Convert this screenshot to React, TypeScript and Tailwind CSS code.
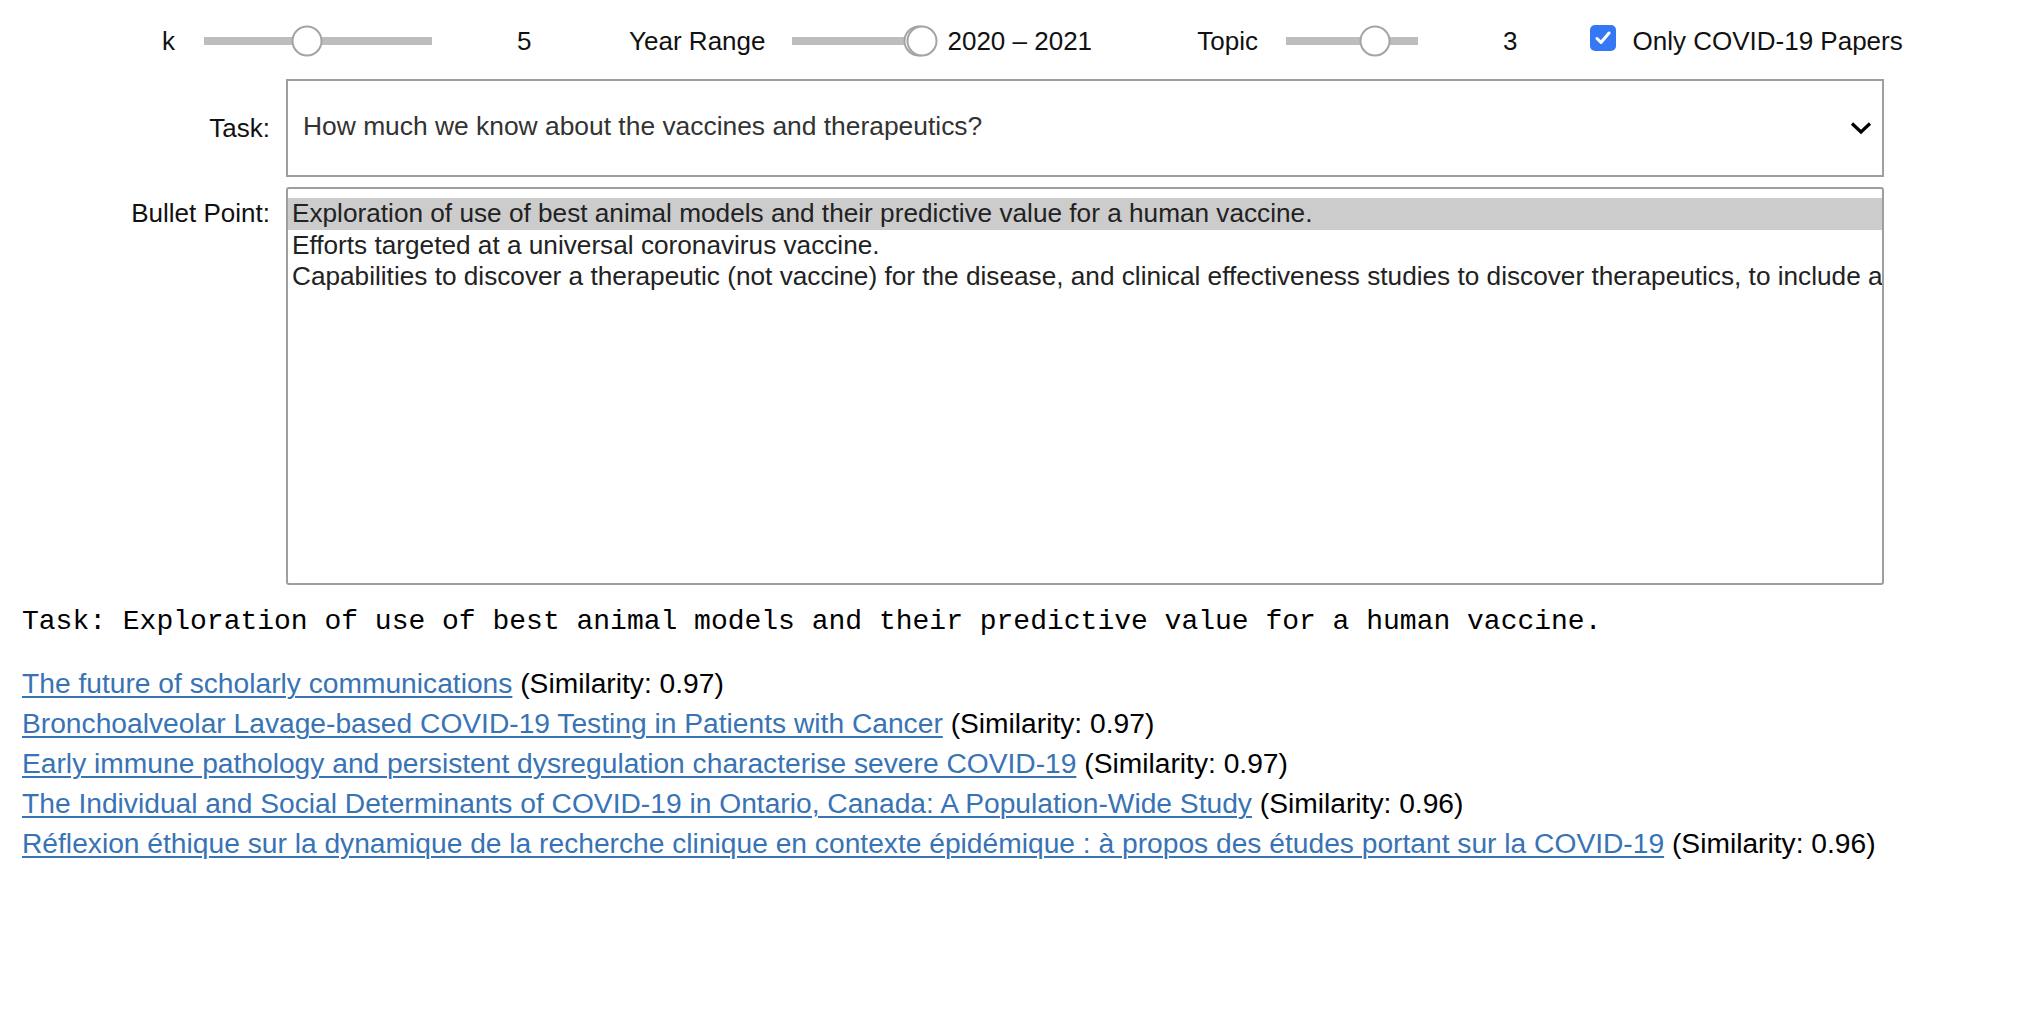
import React from 'react';

const sans = { fontFamily: '"Liberation Sans", Arial, Helvetica, sans-serif' };

// one slider track; thumbs sit over it at a fraction of the track length
function Slider({ trackClass, values }: { trackClass: string; values: number[] }) {
  return (
    <div className="flex h-[56px] items-center px-[15.5px]">
      <div className={`relative h-[8px] bg-[#bdbdbd] ${trackClass}`}>
        {values.map((v, i) => (
          <div
            key={i}
            className="absolute top-1/2 h-[31px] w-[31px] -translate-x-1/2 -translate-y-1/2 rounded-full border-2 border-[#a4a4a4] bg-white"
            style={{ left: `${v * 100}%` }}
          />
        ))}
      </div>
    </div>
  );
}

const bulletPoints = [
  'Exploration of use of best animal models and their predictive value for a human vaccine.',
  'Efforts targeted at a universal coronavirus vaccine.',
  'Capabilities to discover a therapeutic (not vaccine) for the disease, and clinical effectiveness studies to discover therapeutics, to include antiviral agents.',
];

const papers = [
  { title: 'The future of scholarly communications', score: '0.97' },
  { title: 'Bronchoalveolar Lavage-based COVID-19 Testing in Patients with Cancer', score: '0.97' },
  { title: 'Early immune pathology and persistent dysregulation characterise severe COVID-19', score: '0.97' },
  { title: 'The Individual and Social Determinants of COVID-19 in Ontario, Canada: A Population-Wide Study', score: '0.96' },
  {
    title: 'Réflexion éthique sur la dynamique de la recherche clinique en contexte épidémique : à propos des études portant sur la COVID-19',
    score: '0.96',
  },
];

export default function App() {
  return (
    <div className="min-h-screen w-full bg-white pt-[13px] text-black" style={sans}>
      {/* sliders + checkbox */}
      <div className="flex h-[56px] items-center text-[26px] leading-[30px] text-[#111]">
        <div className="w-[175px] text-right">k</div>
        <div className="ml-[13px]">
          <Slider trackClass="w-[228px]" values={[0.456]} />
        </div>
        <div className="ml-[70px]">5</div>
        <div className="w-[234px] text-right">Year Range</div>
        <div className="ml-[11px]">
          <Slider trackClass="w-[130px]" values={[0.977, 1]} />
        </div>
        <div className="ml-[10px] whitespace-nowrap">2020 – 2021</div>
        <div className="w-[166px] text-right">Topic</div>
        <div className="ml-[12px]">
          <Slider trackClass="w-[132px]" values={[0.68]} />
        </div>
        <div className="ml-[70px]">3</div>
        <div className="mb-[7px] ml-[72px] flex h-[26px] w-[26px] items-center justify-center rounded-[5px] bg-[#3478f6]">
          <svg width="16" height="14" viewBox="0 0 16 14" fill="none">
            <path d="M2 7.5 L6 11.5 L14 2" stroke="white" strokeWidth="3" strokeLinecap="round" strokeLinejoin="round" />
          </svg>
        </div>
        <div className="ml-[17px] whitespace-nowrap">Only COVID-19 Papers</div>
      </div>

      {/* task dropdown */}
      <div className="mt-[10px] flex items-center text-[26px]">
        <div className="w-[270px] text-right text-[#111]">Task:</div>
        <div className="ml-[16px] flex h-[98px] w-[1598px] items-center justify-between border-2 border-[#9e9e9e] bg-white pl-[15px] pr-[10px] text-[26.4px] text-[#333]">
          <span className="-mt-[2px]">How much we know about the vaccines and therapeutics?</span>
          <svg width="22" height="14" viewBox="0 0 22 14" fill="none">
            <path d="M2 2.5 L11 11 L20 2.5" stroke="black" strokeWidth="3.2" />
          </svg>
        </div>
      </div>

      {/* bullet point multi-select */}
      <div className="mt-[10px] flex items-start text-[26px]">
        <div className="w-[270px] pt-[11px] text-right leading-[31px] text-[#111]">Bullet Point:</div>
        <div className="ml-[16px] h-[398px] w-[1598px] overflow-hidden rounded-[3px] border-2 border-[#9e9e9e] bg-white pt-[9px] text-[26.2px] text-[#222]">
          {bulletPoints.map((b, i) => (
            <div
              key={b}
              className={`h-[31.5px] whitespace-nowrap pl-[4px] leading-[31.5px] ${i === 0 ? 'bg-[#cccccc]' : ''}`}
            >
              {b}
            </div>
          ))}
        </div>
      </div>

      {/* output */}
      <div
        className="mt-[17px] pl-[22px] text-[28px] leading-[40px] text-black"
        style={{ fontFamily: '"Liberation Mono", "Courier New", monospace' }}
      >
        Task: Exploration of use of best animal models and their predictive value for a human vaccine.
      </div>

      <div className="mt-[21px] pl-[22px] text-[28.2px] leading-[40px]">
        {papers.map((p) => (
          <div key={p.title} className="whitespace-nowrap">
            <a href="#" className="text-[#3873b5] underline decoration-[2px] underline-offset-[3px]">
              {p.title}
            </a>{' '}
            (Similarity: {p.score})
          </div>
        ))}
      </div>
    </div>
  );
}
